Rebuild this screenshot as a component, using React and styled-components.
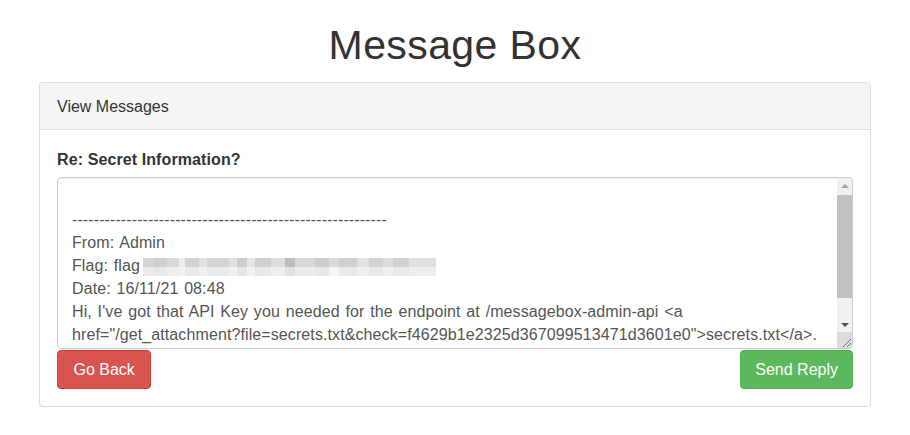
import React from "react";
import styled, { createGlobalStyle } from "styled-components";

const DASHES = "-".repeat(58);

// pixelated "redacted" strip: [width, top shade, bottom shade]
const BLUR_CELLS = [
  [10, "#d6d6d6", "#ececec"],
  [14, "#cfcfcf", "#e8e8e8"],
  [12, "#d9d9d9", "#eeeeee"],
  [6, "#ececec", "#f2f2f2"],
  [14, "#d2d2d2", "#e9e9e9"],
  [8, "#e2e2e2", "#efefef"],
  [22, "#d4d4d4", "#eaeaea"],
  [8, "#e0e0e0", "#f0f0f0"],
  [10, "#cccccc", "#e6e6e6"],
  [8, "#e4e4e4", "#f1f1f1"],
  [16, "#cfcfcf", "#e8e8e8"],
  [14, "#dddddd", "#ededed"],
  [10, "#bdbdbd", "#e2e2e2"],
  [20, "#d8d8d8", "#ebebeb"],
  [14, "#cdcdcd", "#e7e7e7"],
  [10, "#dadada", "#f4f4f4"],
  [18, "#d0d0d0", "#e9e9e9"],
  [12, "#e1e1e1", "#eeeeee"],
  [14, "#d3d3d3", "#e8e8e8"],
  [10, "#dcdcdc", "#efefef"],
  [16, "#d1d1d1", "#e9e9e9"],
  [17, "#e0e0e0", "#ededed"],
];

function stripe(index) {
  let x = 0;
  const stops = BLUR_CELLS.map(cell => {
    const stop = `${cell[index]} ${x}px ${x + cell[0]}px`;
    x += cell[0];
    return stop;
  });
  return `linear-gradient(to right, ${stops.join(", ")})`;
}

const GlobalStyle = createGlobalStyle`
  body {
    margin: 0;
    background: #fff;
    color: #333;
    font-family: "Liberation Sans", Arial, sans-serif;
  }
`;

const StyledPage = styled.div`
  padding: 0 39px;
`;

const StyledTitle = styled.h1`
  margin: 23px 0 14px;
  font-size: 41px;
  font-weight: normal;
  line-height: 45px;
  letter-spacing: 0.4px;
  text-align: center;
  color: #333;
`;

const StyledPanel = styled.div`
  border: 1px solid #ddd;
  border-radius: 4px;
  box-shadow: 0 1px 1px rgba(0, 0, 0, 0.05);
  background: #fff;
`;

const StyledPanelHeading = styled.div`
  display: flex;
  align-items: center;
  height: 47px;
  box-sizing: border-box;
  padding: 2px 17px 0;
  background: #f5f5f5;
  border-bottom: 1px solid #ddd;
  border-radius: 3px 3px 0 0;
  font-size: 16px;
  color: #333;
`;

const StyledPanelBody = styled.div`
  padding: 17px 17px 17px;
`;

const StyledLabel = styled.div`
  margin-bottom: 7px;
  padding-top: 1px;
  height: 22px;
  font-size: 16px;
  font-weight: bold;
  line-height: 23px;
  letter-spacing: 0.1px;
  color: #333;
`;

const StyledTextBox = styled.div`
  display: flex;
  height: 172px;
  box-sizing: border-box;
  border: 1px solid #ccc;
  border-radius: 4px;
  box-shadow: inset 0 1px 1px rgba(0, 0, 0, 0.075);
  overflow: hidden;
`;

const StyledTextContent = styled.div`
  flex: 1;
  padding: 7px 14px;
  font-size: 16px;
  line-height: 23px;
  letter-spacing: 0.1px;
  word-spacing: 1.2px;
  color: #555;
  white-space: pre;
  overflow: hidden;
`;

const StyledLine = styled.div`
  height: 23px;
`;

const StyledRedacted = styled.span`
  display: inline-block;
  width: 293px;
  height: 18px;
  margin-left: 3px;
  vertical-align: -5px;
  background: ${stripe(1)} top / 100% 9px no-repeat,
    ${stripe(2)} bottom / 100% 9px no-repeat;
`;

const StyledScrollbar = styled.div`
  display: flex;
  flex-direction: column;
  width: 15px;
  background: #f1f1f1;
`;

const StyledArrowButton = styled.div`
  display: flex;
  align-items: center;
  justify-content: center;
  height: 15px;
  flex: none;
`;

const StyledArrow = styled.span`
  width: 0;
  height: 0;
  border-left: 4px solid transparent;
  border-right: 4px solid transparent;
  ${p =>
    p.$down
      ? "border-top: 4px solid #505050;"
      : "border-bottom: 4px solid #a3a3a3;"}
`;

const StyledTrack = styled.div`
  flex: 1;
  display: flex;
  flex-direction: column;
  align-items: center;
`;

const StyledThumb = styled.div`
  width: 15px;
  background: #c1c1c1;
`;

const StyledCorner = styled.div`
  height: 16px;
  flex: none;
  background: #dcdcdc;
  display: flex;
  align-items: flex-end;
  justify-content: flex-end;
`;

const StyledActions = styled.div`
  display: flex;
  justify-content: space-between;
  margin-top: 1px;
`;

const StyledButton = styled.button`
  height: 39px;
  padding: 0 ${p => (p.$variant === "danger" ? "15.5px" : "14px")};
  border: 1px solid ${p => (p.$variant === "danger" ? "#d43f3a" : "#4cae4c")};
  border-radius: 4px;
  background: ${p => (p.$variant === "danger" ? "#d9534f" : "#5cb85c")};
  color: #fff;
  font-family: "Liberation Sans", Arial, sans-serif;
  font-size: 16px;
  line-height: 23px;
  cursor: pointer;
`;

function renderScrollbar() {
  return (
    <StyledScrollbar>
      <StyledArrowButton>
        <StyledArrow />
      </StyledArrowButton>
      <StyledTrack>
        <StyledThumb style={{ marginTop: 2, height: 103 }} />
      </StyledTrack>
      <StyledArrowButton>
        <StyledArrow $down />
      </StyledArrowButton>
      <StyledCorner>
        <svg width="12" height="12" viewBox="0 0 12 12">
          <path d="M3 11 L11 3 M7 11 L11 7" stroke="#777" strokeWidth="1" />
        </svg>
      </StyledCorner>
    </StyledScrollbar>
  );
}

export default function App() {
  return (
    <StyledPage>
      <GlobalStyle />
      <StyledTitle>Message Box</StyledTitle>
      <StyledPanel>
        <StyledPanelHeading>View Messages</StyledPanelHeading>
        <StyledPanelBody>
          <StyledLabel>Re: Secret Information?</StyledLabel>
          <StyledTextBox>
            <StyledTextContent>
              <StyledLine />
              <StyledLine>{DASHES}</StyledLine>
              <StyledLine>From: Admin</StyledLine>
              <StyledLine>
                Flag: flag
                <StyledRedacted />
              </StyledLine>
              <StyledLine>Date: 16/11/21 08:48</StyledLine>
              <StyledLine>
                Hi, I've got that API Key you needed for the endpoint at
                /messagebox-admin-api &lt;a
              </StyledLine>
              <StyledLine>
                href="/get_attachment?file=secrets.txt&amp;check=f4629b1e2325d367099513471d3601e0"&gt;secrets.txt&lt;/a&gt;.
              </StyledLine>
            </StyledTextContent>
            {renderScrollbar()}
          </StyledTextBox>
          <StyledActions>
            <StyledButton $variant="danger">Go Back</StyledButton>
            <StyledButton $variant="success">Send Reply</StyledButton>
          </StyledActions>
        </StyledPanelBody>
      </StyledPanel>
    </StyledPage>
  );
}
